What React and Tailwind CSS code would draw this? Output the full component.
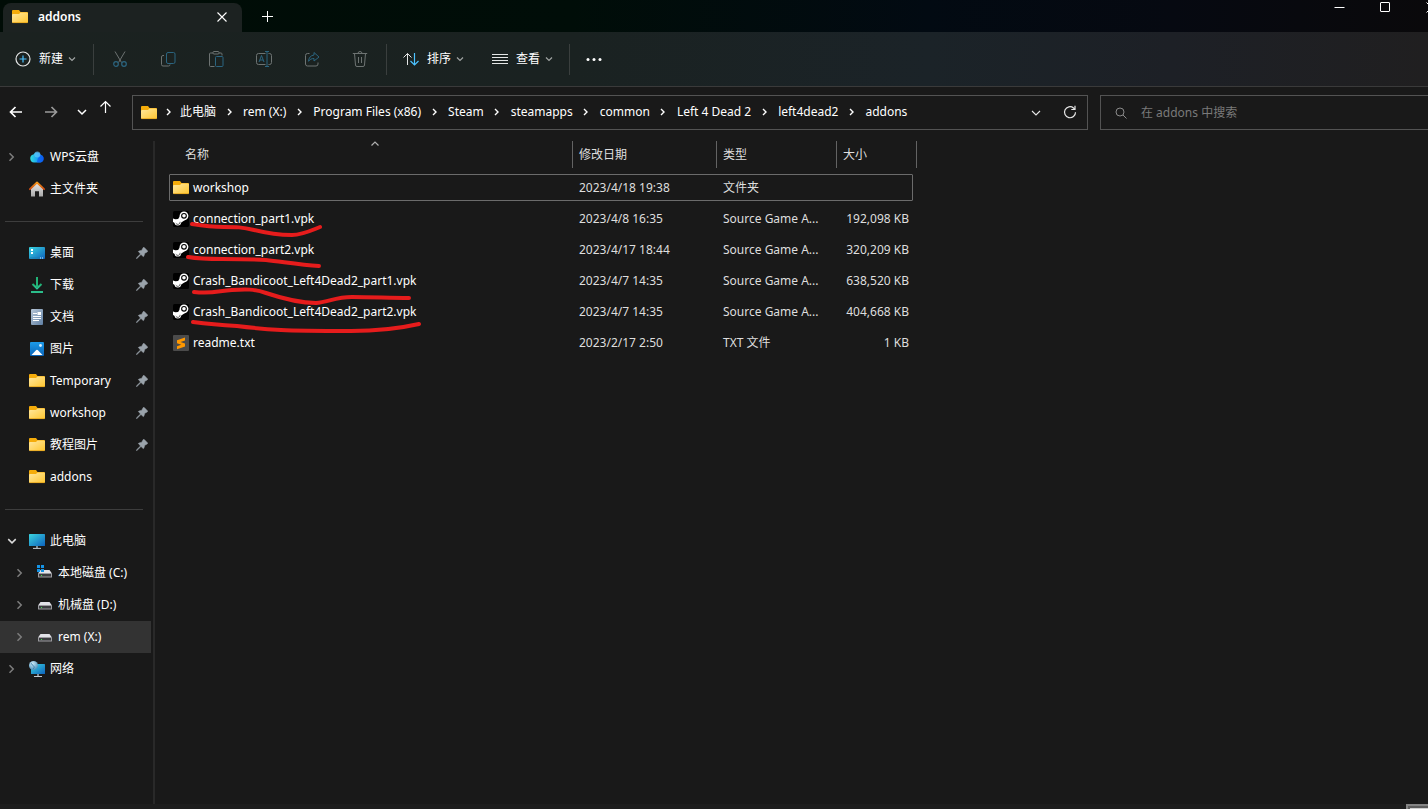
import { Fragment } from 'react'

const TOOLBAR_BG =
  'bg-[linear-gradient(90deg,#1b2220_0%,#1a2221_40%,#1b2328_65%,#1d2026_82%,#201f20_100%)]'

const crumbs = [
  '此电脑',
  'rem (X:)',
  'Program Files (x86)',
  'Steam',
  'steamapps',
  'common',
  'Left 4 Dead 2',
  'left4dead2',
  'addons',
]

const sidebar = [
  { label: 'WPS云盘', icon: CloudIcon, arrow: 'right' },
  { label: '主文件夹', icon: HomeIcon },
  null,
  { label: '桌面', icon: DesktopIcon, pinned: true },
  { label: '下载', icon: DownloadIcon, pinned: true },
  { label: '文档', icon: DocumentIcon, pinned: true },
  { label: '图片', icon: PictureIcon, pinned: true },
  { label: 'Temporary', icon: FolderIcon, pinned: true },
  { label: 'workshop', icon: FolderIcon, pinned: true },
  { label: '教程图片', icon: FolderIcon, pinned: true },
  { label: 'addons', icon: FolderIcon },
  null,
  { label: '此电脑', icon: ComputerIcon, arrow: 'down' },
  { label: '本地磁盘 (C:)', icon: SystemDriveIcon, arrow: 'right', nested: true },
  { label: '机械盘 (D:)', icon: DriveIcon, arrow: 'right', nested: true },
  { label: 'rem (X:)', icon: DriveIcon, arrow: 'right', nested: true, active: true },
  { label: '网络', icon: NetworkIcon, arrow: 'right' },
]

const files = [
  { name: 'workshop', date: '2023/4/18 19:38', type: '文件夹', size: '', icon: FolderIcon, focused: true },
  { name: 'connection_part1.vpk', date: '2023/4/8 16:35', type: 'Source Game A...', size: '192,098 KB', icon: SteamIcon },
  { name: 'connection_part2.vpk', date: '2023/4/17 18:44', type: 'Source Game A...', size: '320,209 KB', icon: SteamIcon },
  { name: 'Crash_Bandicoot_Left4Dead2_part1.vpk', date: '2023/4/7 14:35', type: 'Source Game A...', size: '638,520 KB', icon: SteamIcon },
  { name: 'Crash_Bandicoot_Left4Dead2_part2.vpk', date: '2023/4/7 14:35', type: 'Source Game A...', size: '404,668 KB', icon: SteamIcon },
  { name: 'readme.txt', date: '2023/2/17 2:50', type: 'TXT 文件', size: '1 KB', icon: SublimeIcon },
]

// Shared gradients, referenced by id from the icons below
function IconDefs() {
  return (
    <svg className="absolute h-0 w-0" aria-hidden="true">
      <defs>
        <linearGradient id="folder" x1="0" y1="0" x2="1" y2="1">
          <stop offset="0" stopColor="#ffe8a0" />
          <stop offset="1" stopColor="#ffc62f" />
        </linearGradient>
        <linearGradient id="screen" x1="0" y1="0" x2="1" y2="1">
          <stop offset="0" stopColor="#3bd5e0" />
          <stop offset="1" stopColor="#0d62bd" />
        </linearGradient>
        <linearGradient id="photo" x1="0" y1="0" x2="0" y2="1">
          <stop offset="0" stopColor="#1c9bea" />
          <stop offset="1" stopColor="#0a64b8" />
        </linearGradient>
        <linearGradient id="paper" x1="0" y1="0" x2="1" y2="1">
          <stop offset="0" stopColor="#b9c8d8" />
          <stop offset="1" stopColor="#5f7fa3" />
        </linearGradient>
        <linearGradient id="cloud" x1="0" y1="0" x2="1" y2="0">
          <stop offset="0" stopColor="#35e0d8" />
          <stop offset="0.5" stopColor="#1aa4f5" />
          <stop offset="1" stopColor="#0a5bf0" />
        </linearGradient>
        <linearGradient id="wall" x1="0" y1="0" x2="0" y2="1">
          <stop offset="0" stopColor="#e6e6e6" />
          <stop offset="1" stopColor="#a9a9a9" />
        </linearGradient>
        <linearGradient id="roof" x1="0" y1="0" x2="0" y2="1">
          <stop offset="0" stopColor="#f79a1c" />
          <stop offset="1" stopColor="#cf4a10" />
        </linearGradient>
        <linearGradient id="download" x1="0" y1="0" x2="0" y2="1">
          <stop offset="0" stopColor="#1fae6e" />
          <stop offset="1" stopColor="#2cc79a" />
        </linearGradient>
        <radialGradient id="globe" cx="0.4" cy="0.3" r="0.8">
          <stop offset="0" stopColor="#cdeaf6" />
          <stop offset="1" stopColor="#3d86b4" />
        </radialGradient>
      </defs>
    </svg>
  )
}

function Svg({ children, size = 'size-4' }) {
  return (
    <svg viewBox="0 0 16 16" fill="none" className={`${size} shrink-0`} aria-hidden="true">
      {children}
    </svg>
  )
}

function FolderIcon() {
  return (
    <Svg>
      <path d="M0 2a1 1 0 0 1 1-1h6l1.500 2H15a1 1 0 0 1 1 1v4H0z" fill="#f5ac0a" />
      <path d="M0 6a1 1 0 0 1 1-1h6l1.500-1.500H15a1 1 0 0 1 1 1V13a1 1 0 0 1-1 1H1a1 1 0 0 1-1-1z" fill="url(#folder)" />
      <path d="M.5 13.600h15" stroke="#e5a31b" strokeWidth=".8" />
    </Svg>
  )
}

function CloudIcon() {
  return (
    <Svg>
      <path d="M5 13.500a4 4 0 0 1-.6-7.900A4.300 4.300 0 0 1 12 6a3.900 3.900 0 0 1-.5 7.500z" fill="url(#cloud)" />
      <path d="M8 13.500c0-3 1.500-6 4-7.500a3.900 3.900 0 0 1-.5 7.500z" fill="#0b5cf0" opacity=".7" />
      <circle cx="8.300" cy="5.500" r="3" fill="#62c5f8" opacity=".7" />
    </Svg>
  )
}

function HomeIcon() {
  return (
    <Svg>
      <path d="M2 7.500 8 2l6 5.500V15a.5.5 0 0 1-.5.500H10v-5.300H6v5.300H2.500A.5.500 0 0 1 2 15z" fill="url(#wall)" />
      <path d="M.9 8.200 8 1.500l7.100 6.700" stroke="url(#roof)" strokeWidth="1.800" strokeLinecap="round" strokeLinejoin="round" />
    </Svg>
  )
}

function DesktopIcon() {
  return (
    <Svg>
      <rect x="0" y="2" width="16" height="12" rx="1" fill="url(#screen)" />
      <path d="M2 4h2v2H2zM2 7h2v2H2z" fill="#fff" />
      <path d="M1 13h10" stroke="#1c7fae" />
      <path d="M11 13h1M13 13h1" stroke="#d7efff" />
    </Svg>
  )
}

function DownloadIcon() {
  return (
    <Svg>
      <path d="M3.500 7 8 11.300 12.500 7" stroke="url(#download)" strokeWidth="2" />
      <path d="M2 15h12" stroke="#2bbd8a" strokeWidth="2" />
      <path d="M8 0v11" stroke="#22b377" strokeWidth="2" />
    </Svg>
  )
}

function DocumentIcon() {
  return (
    <Svg>
      <rect x="2" y="0" width="12" height="16" rx="1" fill="url(#paper)" />
      <path d="M4 4.500h4M4 7.500h8M4 9.500h8M4 11.500h6" stroke="#fff" />
      <path d="M8.500 3h3.500v3H8.500z" fill="#fff" />
    </Svg>
  )
}

function PictureIcon() {
  return (
    <Svg>
      <rect x="1" y="1" width="14" height="14" rx="1" fill="url(#photo)" />
      <path d="M2.500 14 7.300 9a1 1 0 0 1 1.400 0l4.800 5z" fill="#fff" />
      <circle cx="11.500" cy="4.500" r="1.400" fill="#d8f0ff" />
    </Svg>
  )
}

function ComputerIcon() {
  return (
    <Svg>
      <rect x="0" y="1" width="16" height="12" rx=".6" fill="url(#screen)" />
      <path d="M7 13h2v2H7z" fill="#7f8b93" />
      <path d="M4 15.400h8" stroke="#c4ccd2" />
    </Svg>
  )
}

function DriveIcon() {
  return (
    <Svg>
      <path d="M3.500 5h9L15 8.500H1z" fill="#e2e2e8" />
      <rect x="1" y="8" width="14" height="4.500" rx=".5" fill="#9b9b9f" />
      <rect x="2" y="9" width="12" height="2.500" fill="#3c3c40" />
      <path d="M4 10h1v1H4z" fill="#3ee24a" />
    </Svg>
  )
}

function SystemDriveIcon() {
  return (
    <Svg>
      <path d="M3.500 5h9L15 8.500H1z" fill="#e2e2e8" />
      <rect x="1" y="8" width="14" height="4.500" rx=".5" fill="#9b9b9f" />
      <rect x="2" y="9" width="12" height="2.500" fill="#3c3c40" />
      <path d="M4 10h1v1H4z" fill="#3ee24a" />
      <path d="M0 0h3v3H0zM4 0h3v3H4zM0 4h3v3H0zM4 4h3v3H4z" fill="#1594e6" />
    </Svg>
  )
}

function NetworkIcon() {
  return (
    <Svg>
      <rect x="2" y="3" width="14" height="10" rx=".5" fill="url(#screen)" />
      <path d="M8 13h2v2H8z" fill="#7f8b93" />
      <path d="M5 15.500h8" stroke="#c4ccd2" />
      <circle cx="4.500" cy="4.500" r="4.500" fill="url(#globe)" />
      <path d="M2 2.500c2 .5 1 2 2.500 2.500S5 7 4 8" stroke="#2f78a8" strokeWidth=".8" />
    </Svg>
  )
}

function SteamIcon() {
  return (
    <Svg>
      <rect width="16" height="16" rx="1.500" fill="#000" />
      <path d="M0 7.500 4.500 9 7 5l5 4-4.500 3L4 13 0 11z" fill="#fff" />
      <circle cx="11" cy="4.800" r="4.400" fill="#fff" />
      <circle cx="11" cy="4.800" r="2.900" fill="#000" />
      <circle cx="11" cy="4.800" r="1.800" fill="#fff" />
      <circle cx="4.800" cy="11.300" r="3.300" fill="#fff" />
      <path d="M2.800 12.200a2.300 2.300 0 0 0 4.300-1.400" stroke="#000" strokeWidth=".6" />
    </Svg>
  )
}

function SublimeIcon() {
  return (
    <Svg>
      <rect width="16" height="16" rx="1" fill="#4b4b4b" />
      <path d="M12 2.500v3L7.500 7 12 8.500v3l-8 2.700v-3l4.300-1.500L4 8.200v-3z" fill="#ff9800" />
    </Svg>
  )
}

function PinIcon() {
  return (
    <svg viewBox="0 0 12 12" className="size-3 shrink-0" aria-hidden="true">
      <path
        d="M7.200.6a.8.8 0 0 1 1.100 0l3.100 3.100a.8.8 0 0 1-.2 1.300L8.800 6.200l-.9 2.900a.6.6 0 0 1-1 .2L5 7.500 1.200 11.300l-.9.300.3-.9L4.500 6.900 2.700 5.100a.6.6 0 0 1 .2-1l2.900-.9z"
        fill="#9aa3ab"
        stroke="#9aa3ab"
        strokeWidth=".5"
      />
    </svg>
  )
}

function Chevron({ dir = 'down', className = 'size-2' }) {
  const paths = {
    down: 'M1 2.500l3 3 3-3',
    right: 'M2 1l3 3-3 3',
    up: 'M.5 5.500 4 2l3.500 3.500',
  }
  return (
    <svg viewBox="0 0 8 8" fill="none" className={`${className} shrink-0`} aria-hidden="true">
      <path d={paths[dir]} stroke="currentColor" strokeWidth="1.200" />
    </svg>
  )
}

function TitleBar() {
  return (
    <header className="flex h-8 items-start overflow-hidden bg-[linear-gradient(90deg,#000c06_0%,#000d08_40%,#020a12_65%,#060911_82%,#0a090b_100%)]">
      <div className="mt-[3px] ml-[3px] flex h-[29px] w-[239px] items-center rounded-t-lg bg-[#1c2221] pr-[14px] pb-[2px] pl-[9px]">
        <FolderIcon />
        <span className="ml-[10px] flex-1 text-[12px] font-semibold">addons</span>
        <button type="button" aria-label="关闭标签页" className="flex size-3 items-center justify-center">
          <svg viewBox="0 0 12 12" className="size-3" stroke="#fff" strokeWidth="1.100">
            <path d="M1.500 1.500l9 9M10.500 1.500l-9 9" />
          </svg>
        </button>
      </div>
      <button type="button" aria-label="新标签页" className="mt-[2px] flex h-[27px] w-[50px] items-center justify-center">
        <svg viewBox="0 0 12 12" className="size-3" stroke="#fff">
          <path d="M6.500 1v11M1 6.500h11" />
        </svg>
      </button>
      <div className="-mr-[26px] ml-auto flex">
        <button type="button" aria-label="最小化" className="flex h-[15px] w-[45px] items-center justify-center">
          <svg viewBox="0 0 11 11" className="size-[11px]" stroke="#fff">
            <path d="M.5 5.500h10" />
          </svg>
        </button>
        <button type="button" aria-label="最大化" className="flex h-[15px] w-[46px] items-center justify-center">
          <svg viewBox="0 0 11 11" className="size-[11px]" stroke="#fff" fill="none">
            <rect x=".5" y=".5" width="9" height="9" rx=".5" />
          </svg>
        </button>
        <button type="button" aria-label="关闭" className="flex h-[15px] w-[46px] items-center justify-center">
          <svg viewBox="0 0 11 11" className="size-[11px]" stroke="#fff">
            <path d="M.5.500l10 10M10.500.500l-10 10" />
          </svg>
        </button>
      </div>
    </header>
  )
}

const G = '#6d7372'
const B = '#2b6580'

const actions = [
  {
    label: '剪切',
    draw: (
      <>
        <path d="M3 .5l6.500 11M13 .5l-6.500 11" stroke={G} />
        <circle cx="4" cy="13" r="2.300" stroke={B} strokeWidth="1.200" />
        <circle cx="12" cy="13" r="2.300" stroke={B} strokeWidth="1.200" />
      </>
    ),
  },
  {
    label: '复制',
    draw: (
      <>
        <path d="M4 4.500H3a1.500 1.500 0 0 0-1.500 1.500v7.500A1.500 1.500 0 0 0 3 15h5.500a1.500 1.500 0 0 0 1.500-1.500" stroke={G} />
        <rect x="6.500" y="1.500" width="8.500" height="11" rx="1.500" stroke={B} />
      </>
    ),
  },
  {
    label: '粘贴',
    draw: (
      <>
        <path d="M5 2H2.500a1 1 0 0 0-1 1v11.500a1 1 0 0 0 1 1h4M11 2h2a1 1 0 0 1 1 1v1.500" stroke={G} />
        <rect x="5" y=".5" width="6" height="2.500" rx="1" stroke={G} />
        <rect x="7.500" y="5.500" width="7.500" height="10" rx="1" stroke={B} />
      </>
    ),
  },
  {
    label: '重命名',
    draw: (
      <>
        <path d="M9.500 2.500h-7A2 2 0 0 0 .5 4.500v7a2 2 0 0 0 2 2h7M12.500 2.500h1a2 2 0 0 1 2 2v7a2 2 0 0 1-2 2h-1" stroke={G} />
        <path d="M3 11l2.500-6.500L8 11M4 9h3" stroke={B} />
        <path d="M11 .5v15M9 .5h4M9 15.500h4" stroke={B} />
      </>
    ),
  },
  {
    label: '共享',
    draw: (
      <>
        <path d="M5.500 2.500h-2a2 2 0 0 0-2 2V13a2 2 0 0 0 2 2h8.500a2 2 0 0 0 2-2v-1.500" stroke={G} />
        <path d="M10 1.500l5 4.500-5 4V7.500c-2.500 0-4 .8-5.500 2.800.3-3.500 2-5.800 5.500-6.300z" stroke={B} strokeLinejoin="round" />
      </>
    ),
  },
  {
    label: '删除',
    draw: (
      <>
        <path d="M.8 2.500h14.400M6 2.500a2 2 0 0 1 4 0M2.500 2.500l1 11.500a1.500 1.500 0 0 0 1.500 1.500h6a1.500 1.500 0 0 0 1.500-1.500l1-11.500M6.500 6v6M9.500 6v6" stroke={G} />
      </>
    ),
  },
]

function Divider() {
  return <span className="h-[31px] w-px bg-[#3a3f3e]" />
}

function ToolbarMenu({ label, className, children }) {
  return (
    <button type="button" className={`flex h-8 items-center ${className}`}>
      <Svg>{children}</Svg>
      <span className="ml-2">{label}</span>
      <Chevron className="ml-[5px] size-2 text-[#a0a4a3]" />
    </button>
  )
}

function Toolbar() {
  return (
    <div className={`flex h-[55px] items-center border-b border-[#3a3a3a] text-[12px] ${TOOLBAR_BG}`}>
      <ToolbarMenu label="新建" className="pr-[17px] pl-[15px]">
        <circle cx="8" cy="8" r="7" stroke="#e4e6e6" strokeWidth="1.200" />
        <path d="M8 4.500v7M4.500 8h7" stroke="#4cc2ff" strokeWidth="1.200" />
      </ToolbarMenu>
      <Divider />
      <div className="mx-[2px] flex">
        {actions.map((a) => (
          <button key={a.label} type="button" disabled aria-label={a.label} className="flex h-8 w-12 items-center justify-center">
            <Svg>{a.draw}</Svg>
          </button>
        ))}
      </div>
      <Divider />
      <ToolbarMenu label="排序" className="pr-3 pl-4">
        <path d="M4.500 14V2.500M.5 6.500l4-4 4 4" stroke="#e4e6e6" />
        <path d="M11.500 2v12M7.500 10l4 4 4-4" stroke="#4cc2ff" strokeWidth="1.200" />
      </ToolbarMenu>
      <ToolbarMenu label="查看" className="px-4">
        <path d="M0 3.500h16M0 6.500h16M0 9.500h16M0 12.500h16" stroke="#e4e6e6" />
      </ToolbarMenu>
      <Divider />
      <button type="button" aria-label="更多" className="flex h-8 items-center px-4">
        <Svg>
          <g fill="#fff">
            <circle cx="2" cy="8.500" r="1.500" />
            <circle cx="8" cy="8.500" r="1.500" />
            <circle cx="14" cy="8.500" r="1.500" />
          </g>
        </Svg>
      </button>
    </div>
  )
}

function AddressRow() {
  return (
    <div className="flex h-[51px] items-center">
      <nav className="flex w-[132px] shrink-0 items-center pb-[2px] pl-2">
        <button type="button" aria-label="后退" className="size-4">
          <Svg>
            <path d="M14 8H2.500M7.500 3l-5 5 5 5" stroke="#fff" strokeWidth="1.700" />
          </Svg>
        </button>
        <button type="button" aria-label="前进" className="ml-[19px] size-4">
          <Svg>
            <path d="M2 8h11.500M8.500 3l5 5-5 5" stroke="#9a9a9a" strokeWidth="1.700" />
          </Svg>
        </button>
        <button type="button" aria-label="最近的位置" className="ml-[17px] flex w-[11px] justify-center">
          <svg viewBox="0 0 10 10" fill="none" className="size-[10px]">
            <path d="M1 3l4 4 4-4" stroke="#fff" strokeWidth="1.500" />
          </svg>
        </button>
        <button type="button" aria-label="上一级" className="mb-[10px] ml-[10px] size-4">
          <Svg>
            <path d="M8.500 14V2.500M3.500 7.500l5-5 5 5" stroke="#fff" strokeWidth="1.200" />
          </Svg>
        </button>
      </nav>
      <div className="flex h-[35px] min-w-0 flex-1 items-center border border-[#535353] pl-2 text-[12px]">
        <FolderIcon />
        {crumbs.map((c, i) => (
          <Fragment key={c}>
            <span className={`flex justify-center pb-px ${i === 0 ? 'w-[23px]' : 'w-[27px]'}`}>
              <svg viewBox="0 0 8 8" fill="none" className="size-2">
                <path d="M2 1l3 3-3 3" stroke="#fff" strokeWidth="1.400" />
              </svg>
            </span>
            <a href={`#crumb-${i}`} className="pb-px whitespace-nowrap">
              {c}
            </a>
          </Fragment>
        ))}
        <button type="button" aria-label="历史记录" className="ml-auto flex w-6 justify-center">
          <svg viewBox="0 0 10 10" fill="none" className="size-[10px]">
            <path d="M1 3l4 4 4-4" stroke="#e8e8e8" strokeWidth="1.100" />
          </svg>
        </button>
        <button type="button" aria-label="刷新" className="mr-[9px] ml-[14px] size-4">
          <Svg>
            <path d="M13.500 7.200A5.500 5.500 0 1 1 11.500 3l1.300 1.200" stroke="#e8e8e8" strokeWidth="1.200" />
            <path d="M13 .8v3.700H9.300" stroke="#e8e8e8" strokeWidth="1.200" />
          </Svg>
        </button>
      </div>
      <label className="ml-3 flex h-[35px] w-[328px] shrink-0 items-center border border-r-0 border-[#535353] pl-[14px]">
        <svg viewBox="0 0 12 12" fill="none" stroke="#8a8a8a" className="size-3 shrink-0">
          <circle cx="5" cy="5" r="4" />
          <path d="M8 8l3.500 3.500" />
        </svg>
        <input
          type="text"
          aria-label="搜索"
          placeholder="在 addons 中搜索"
          className="ml-[14px] w-full bg-transparent text-[12px] outline-none placeholder:text-[#7a7a7a]"
        />
      </label>
    </div>
  )
}

function Sidebar() {
  return (
    <aside className="w-[155px] shrink-0 border-r-2 border-[#292929] pr-[2px] text-[12px]">
      {sidebar.map((item, i) =>
        item ? (
          <a
            key={i}
            href={`#nav-${i}`}
            className={`flex h-8 items-center pr-[3px] ${item.nested ? 'pl-[15px]' : 'pl-[7px]'} ${
              item.active ? 'bg-[#333333]' : ''
            }`}
          >
            <span className={`flex w-[22px] ${item.arrow === 'down' ? 'text-[#dcdcdc]' : 'text-[#7d7d7d]'}`}>
              {item.arrow ? <Chevron dir={item.arrow} className="size-[10px]" /> : null}
            </span>
            <item.icon />
            <span className="ml-[5px] flex-1 whitespace-nowrap">{item.label}</span>
            {item.pinned ? <PinIcon /> : null}
          </a>
        ) : (
          <div key={i} className="flex h-8 items-center pr-2 pl-[5px]">
            <hr className="w-full border-[#3d3d3d]" />
          </div>
        )
      )}
    </aside>
  )
}

// Red pen marks drawn over the file names
function PenMarks() {
  return (
    <svg
      className="pointer-events-none absolute top-[77px] left-[27px]"
      width="260"
      height="120"
      viewBox="182 218 260 120"
      fill="none"
      stroke="#e61c1c"
      strokeWidth="4"
      strokeLinecap="round"
      strokeLinejoin="round"
      aria-hidden="true"
    >
      <path d="M192 224c12 2 20 3 32 3s18 0 30 3 26 5 38 5c10 0 18-4 28-8" />
      <path d="M188 257c12 2 20 2 34 2s28 0 44 1c18 2 34 5 53 6" />
      <path d="M194 292c18 2 24-1 38-2s22-1 34 3 32 10 50 10c12-1 20-6 36-6 20 0 38 1 57 1" />
      <path d="M193 322c16 2 28 3 44 4 16 2 26 3 44 4s48 1 70 1 46-2 68-7" />
    </svg>
  )
}

function FileList() {
  return (
    <main className="relative min-w-0 flex-1 pl-[14px]">
      <table className="w-[748px] table-fixed border-collapse text-[12px]">
        <colgroup>
          <col className="w-[404px]" />
          <col className="w-[144px]" />
          <col className="w-[120px]" />
          <col className="w-[80px]" />
        </colgroup>
        <thead>
          <tr className="h-[31px] text-left align-top text-[#dedede]">
            <th className="relative p-0 font-normal">
              <div className="h-[27px] border-r border-[#636363] pl-4 leading-[28px]">名称</div>
              <span className="absolute -top-px left-[202px]">
                <Chevron dir="up" className="size-2 text-[#b0b0b0]" />
              </span>
            </th>
            {['修改日期', '类型', '大小'].map((h) => (
              <th key={h} className="p-0 font-normal">
                <div className="h-[27px] border-r border-[#636363] pl-[6px] leading-[28px]">{h}</div>
              </th>
            ))}
          </tr>
        </thead>
        <tbody>
          {files.map((f) => (
            <tr key={f.name} className="relative h-[31px] text-[#dedede]">
              <td className="p-0 text-white">
                {f.focused ? (
                  <span className="absolute inset-y-[2px] right-1 left-0 rounded-[1px] border border-[#6b6b6b]" />
                ) : null}
                <div className="flex items-center pl-1">
                  <f.icon />
                  <span className="ml-1">{f.name}</span>
                </div>
              </td>
              <td className="p-0 pl-[6px]">{f.date}</td>
              <td className="p-0 pl-[6px] whitespace-nowrap">{f.type}</td>
              <td className="p-0 pr-2 text-right whitespace-nowrap">{f.size}</td>
            </tr>
          ))}
        </tbody>
      </table>
      <PenMarks />
    </main>
  )
}

export default function App() {
  return (
    <div className="flex min-h-screen flex-col overflow-hidden bg-[#191919] font-['Noto_Sans','Noto_Sans_CJK_SC',sans-serif] text-white">
      <IconDefs />
      <TitleBar />
      <Toolbar />
      <AddressRow />
      <div className="mt-[3px] flex flex-1">
        <Sidebar />
        <FileList />
      </div>
      <footer className="flex h-[5px] justify-end bg-[#1d1d1d]">
        <div className="w-[22px] border-t-2 border-l-2 border-[#858585] bg-[#5c5c5c] pt-[2px] pl-[2px]">
          <div className="h-px bg-[#d0d0d0]" />
        </div>
      </footer>
    </div>
  )
}
